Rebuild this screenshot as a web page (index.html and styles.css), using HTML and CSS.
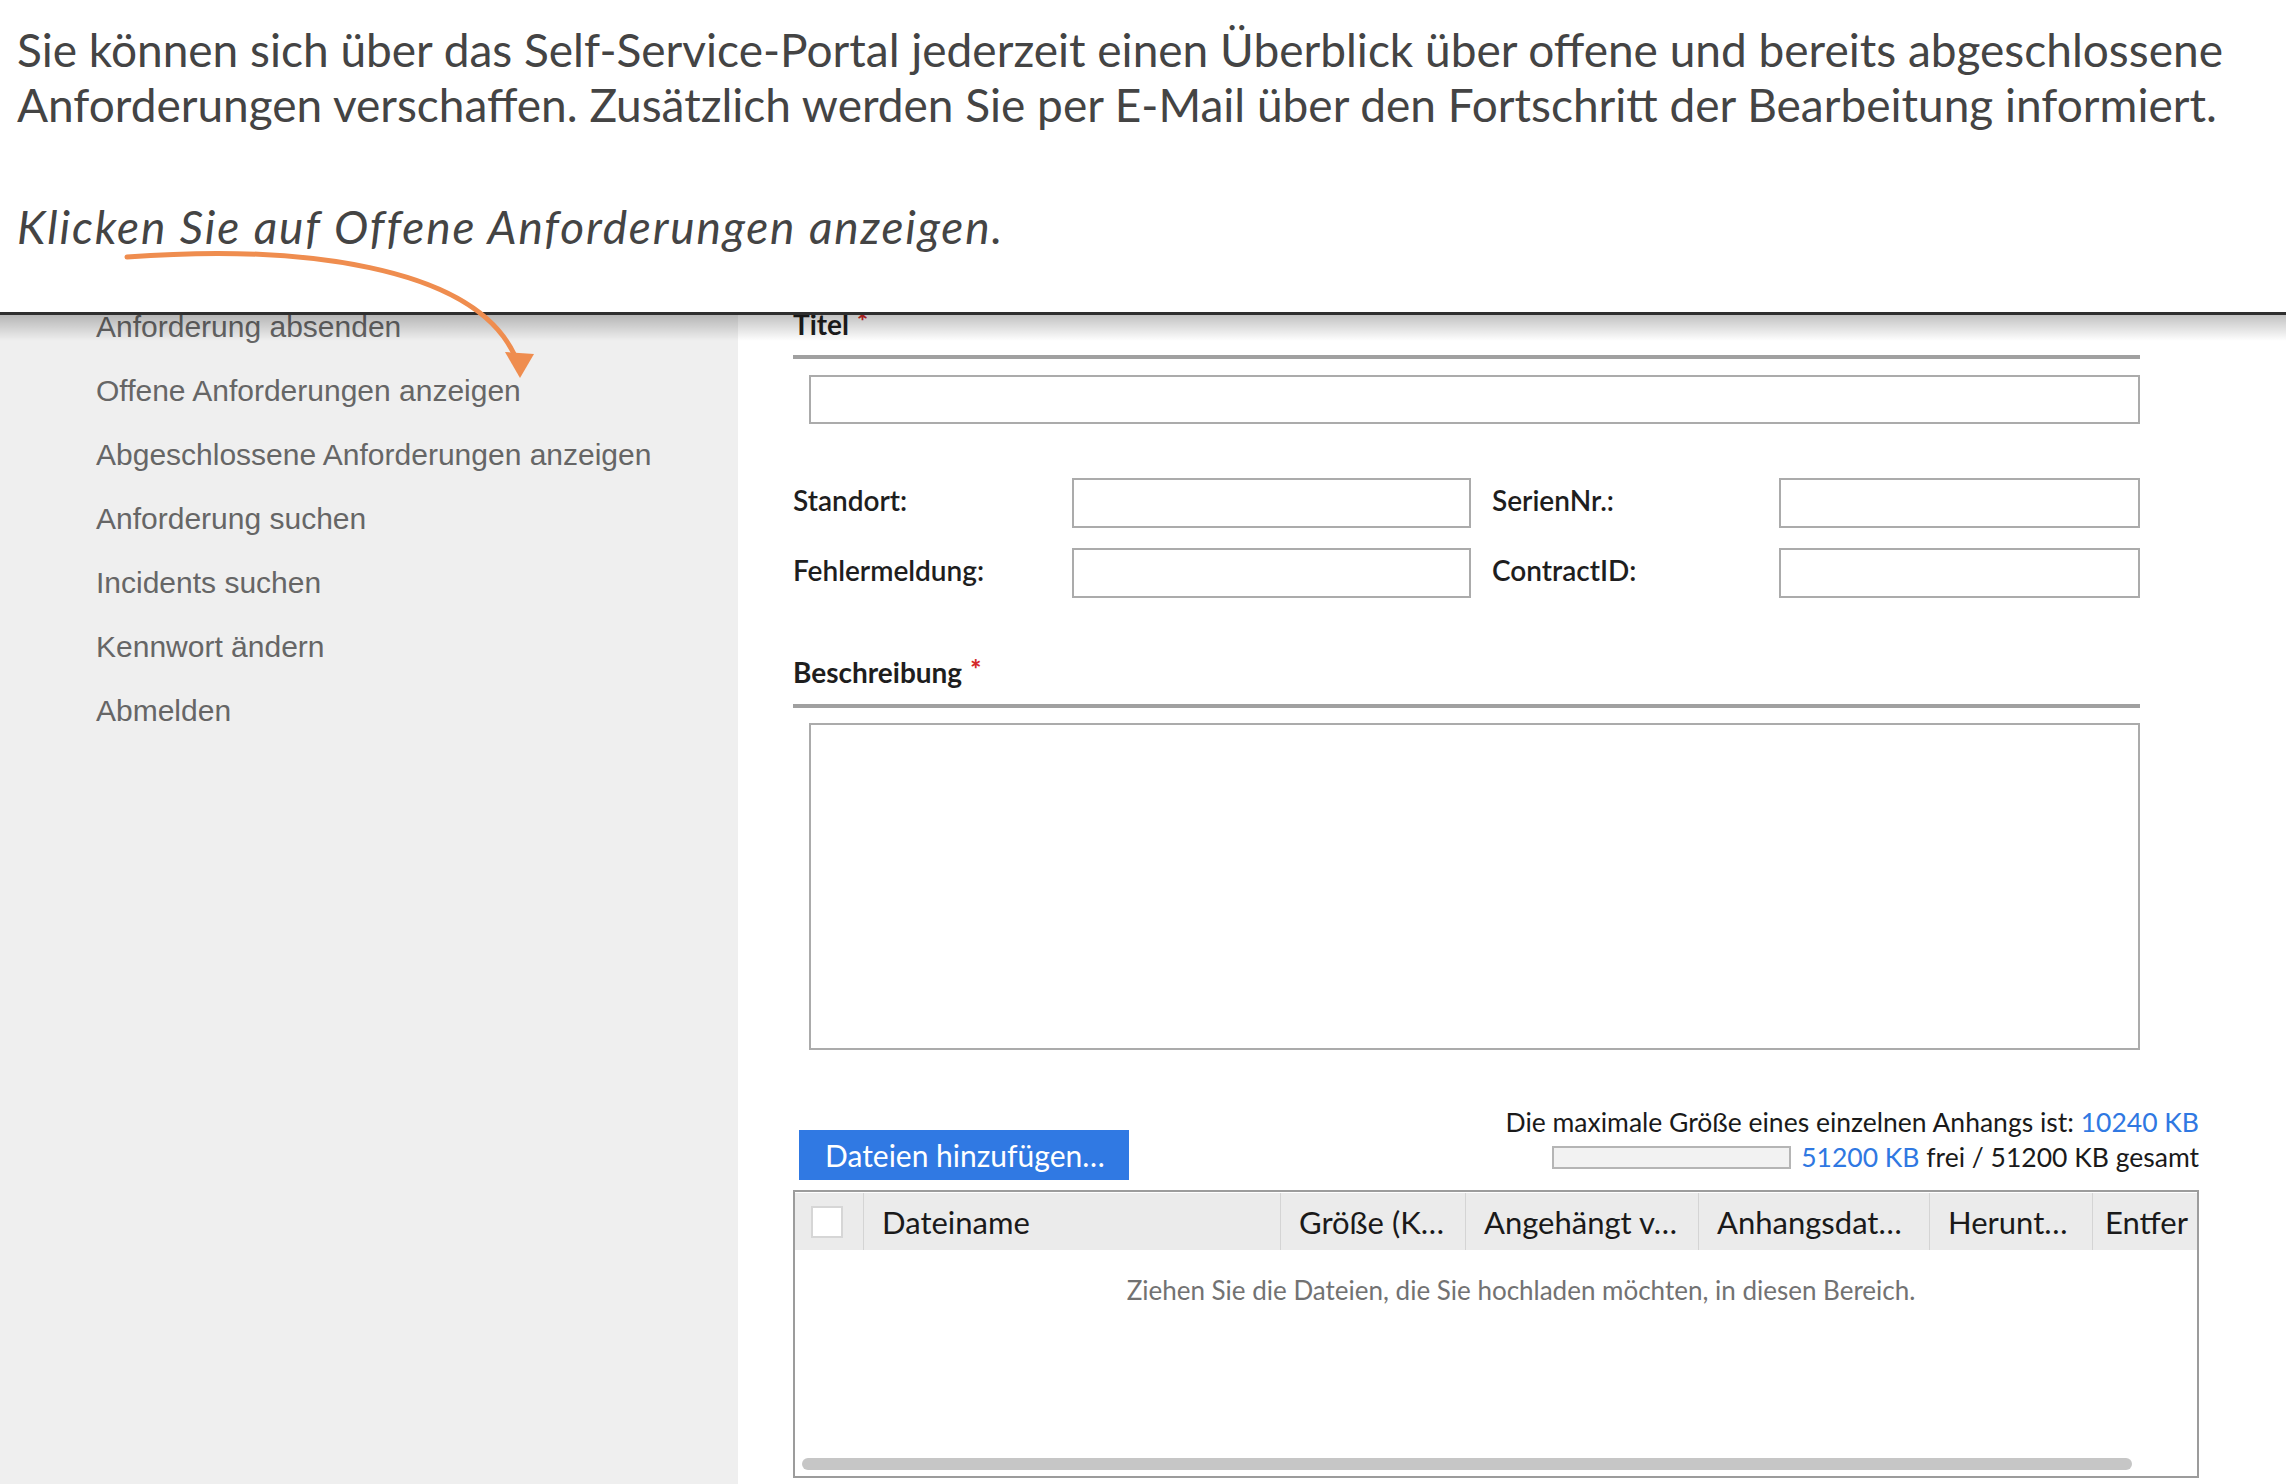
FILE: index.html
```html
<!DOCTYPE html>
<html lang="de">
<head>
<meta charset="utf-8">
<title>Self-Service-Portal</title>
<link rel="stylesheet" href="styles.css">
</head>
<body>
<div class="page">
  <section class="intro">
    <p class="lead">Sie können sich über das Self-Service-Portal jederzeit einen Überblick über offene und bereits abgeschlossene<br>Anforderungen verschaffen. Zusätzlich werden Sie per E-Mail über den Fortschritt der Bearbeitung informiert.</p>
    <p class="instr">Klicken Sie auf Offene Anforderungen anzeigen.</p>
  </section>

  <section class="shot">
    <nav class="sidebar">
      <ul class="menu">
        <li>Anforderung absenden</li>
        <li>Offene Anforderungen anzeigen</li>
        <li>Abgeschlossene Anforderungen anzeigen</li>
        <li>Anforderung suchen</li>
        <li>Incidents suchen</li>
        <li>Kennwort ändern</li>
        <li>Abmelden</li>
      </ul>
    </nav>

    <main class="form">
      <div class="field-head first">Titel<span class="req">*</span></div>
      <input class="box title-input" type="text">

      <div class="grid">
        <label class="lbl">Standort:</label>
        <input class="box" type="text">
        <label class="lbl lbl2">SerienNr.:</label>
        <input class="box" type="text">
        <label class="lbl">Fehlermeldung:</label>
        <input class="box" type="text">
        <label class="lbl lbl2">ContractID:</label>
        <input class="box" type="text">
      </div>

      <div class="field-head desc-head">Beschreibung<span class="req">*</span></div>
      <textarea class="box desc"></textarea>

      <div class="upload">
        <button class="add-btn" type="button">Dateien hinzufügen…</button>
        <div class="quota">
          <div class="q-line">Die maximale Größe eines einzelnen Anhangs ist: <span class="blue">10240 KB</span></div>
          <div class="q-line"><span class="bar"></span><span class="blue">51200 KB</span> frei / 51200 KB gesamt</div>
        </div>
      </div>

      <div class="files">
        <div class="thead">
          <div class="th th-check"><span class="chk"></span></div>
          <div class="th th-name">Dateiname</div>
          <div class="th th-size">Größe (K…</div>
          <div class="th th-by">Angehängt v…</div>
          <div class="th th-date">Anhangsdat…</div>
          <div class="th th-dl">Herunt…</div>
          <div class="th th-rm">Entfer</div>
        </div>
        <div class="tbody">
          <p class="empty">Ziehen Sie die Dateien, die Sie hochladen möchten, in diesen Bereich.</p>
        </div>
        <div class="hscroll"></div>
      </div>
    </main>
  </section>

  <svg class="arrow" width="2286" height="420" viewBox="0 0 2286 420" aria-hidden="true">
    <path d="M127,257 C300,244 472,266 514,354" fill="none" stroke="#ef8d4f" stroke-width="5" stroke-linecap="round"/>
    <polygon points="505,352 534,354 520,378" fill="#ef8d4f"/>
  </svg>
</div>
</body>
</html>
```

FILE: styles.css
```css
* { box-sizing: border-box; }

html, body {
  margin: 0;
  padding: 0;
  background: #ffffff;
}

.page {
  position: relative;
  width: 2286px;
  height: 1484px;
  overflow: hidden;
}

/* ---------- instruction text ---------- */
.intro {
  height: 312px;
  padding: 22px 17px 0;
  font-family: Lato, "Open Sans", sans-serif;
  font-size: 46px;
  line-height: 55px;
  color: #444444;
}

.intro p {
  margin: 0;
}

.lead {
  white-space: nowrap;
}

.intro .instr {
  margin-top: 67px;
  font-style: italic;
  letter-spacing: 1.85px;
}

/* ---------- embedded screenshot ---------- */
.shot {
  position: relative;
  display: flex;
  height: 1172px;
  border-top: 3px solid #2e2e2e;
  overflow: hidden;
}

.shot::after {
  content: "";
  position: absolute;
  left: 0;
  right: 0;
  top: 0;
  height: 26px;
  background: linear-gradient(rgba(0, 0, 0, 0.24), rgba(0, 0, 0, 0));
  pointer-events: none;
}

.sidebar {
  flex: 0 0 738px;
  background: #efefef;
}

.menu {
  list-style: none;
  margin: -20px 0 0;
  padding: 0 0 0 96px;
  font-family: "Liberation Sans", Arial, sans-serif;
  font-size: 30px;
  line-height: 64px;
  color: #666666;
}

/* ---------- form ---------- */
.form {
  flex: 1;
  padding: 0 87px 0 55px;
  font-family: Lato, "Open Sans", sans-serif;
  color: #1e1e1e;
}

.field-head {
  width: 1347px;
  font-size: 28px;
  font-weight: 700;
  line-height: 40px;
  padding-bottom: 11px;
  border-bottom: 4px solid #a0a0a0;
}

.field-head.first {
  margin-top: -11px;
}

.req {
  color: #d42a2a;
  font-size: 26px;
  font-weight: 900;
  line-height: 0;
  vertical-align: 4px;
  margin-left: 8px;
}

.box {
  display: block;
  margin: 0;
  border: 2px solid #ababab;
  background: #ffffff;
  border-radius: 0;
  outline: none;
  font: inherit;
}

.title-input {
  width: 1331px;
  height: 49px;
  margin: 16px 0 0 16px;
}

.grid {
  display: grid;
  width: 1347px;
  margin-top: 54px;
  grid-template-columns: 279px 399px 308px 361px;
  grid-auto-rows: 50px;
  row-gap: 20px;
  align-items: center;
}

.grid .box {
  width: 100%;
  height: 50px;
}

.lbl {
  font-size: 28px;
  font-weight: 600;
  color: #1e1e1e;
  margin-top: -6px;
}

.lbl2 {
  padding-left: 21px;
}

.desc-head {
  margin-top: 54px;
  padding-bottom: 12px;
}

.desc {
  width: 1331px;
  height: 327px;
  margin: 15px 0 0 16px;
  resize: none;
}

/* ---------- attachments ---------- */
.upload {
  display: flex;
  justify-content: space-between;
  align-items: flex-end;
  margin-top: 55px;
}

.add-btn {
  height: 50px;
  margin-left: 6px;
  padding: 0 24px 0 26px;
  border: none;
  background: #3079e3;
  color: #ffffff;
  font-family: Lato, "Open Sans", sans-serif;
  font-size: 30px;
  line-height: 50px;
}

.quota {
  margin-bottom: 5px;
  text-align: right;
  font-size: 26.5px;
  line-height: 35px;
  color: #1a1a1a;
}

.q-line {
  display: flex;
  justify-content: flex-end;
  align-items: center;
  white-space: pre;
}

.blue {
  color: #2f78e2;
}

.bar {
  display: inline-block;
  width: 239px;
  height: 23px;
  margin-right: 10px;
  border: 2px solid #b5b5b5;
  background: #f2f2f2;
}

.files {
  display: flex;
  flex-direction: column;
  height: 288px;
  margin-top: 10px;
  padding-top: 1px;
  border: 2px solid #9c9c9c;
}

.thead {
  display: flex;
  height: 57px;
  background: #ebebeb;
  font-size: 31px;
  color: #1a1a1a;
  flex-shrink: 0;
}

.th {
  display: flex;
  align-items: center;
  padding-left: 18px;
  border-left: 1px solid #d4d4d4;
  white-space: nowrap;
  overflow: hidden;
}

.th-check { width: 68px; border-left: none; padding-left: 16px; }
.th-name  { width: 417px; }
.th-size  { width: 185px; }
.th-by    { width: 233px; }
.th-date  { width: 231px; }
.th-dl    { width: 163px; }
.th-rm    { flex: 1; padding-left: 12px; }

.chk {
  display: block;
  width: 32px;
  height: 32px;
  background: #ffffff;
  border: 2px solid #d6d6d6;
}

.tbody {
  flex: 1;
  padding-left: 50px;
}

.empty {
  margin: 24px 0 0;
  text-align: center;
  font-size: 26px;
  color: #727272;
}

.hscroll {
  flex-shrink: 0;
  width: 1330px;
  height: 12px;
  margin: 0 0 6px 7px;
  border-radius: 6px;
  background: #c6c6c6;
}

/* ---------- annotation arrow ---------- */
.arrow {
  position: absolute;
  left: 0;
  top: 0;
  z-index: 2;
  pointer-events: none;
}
```
